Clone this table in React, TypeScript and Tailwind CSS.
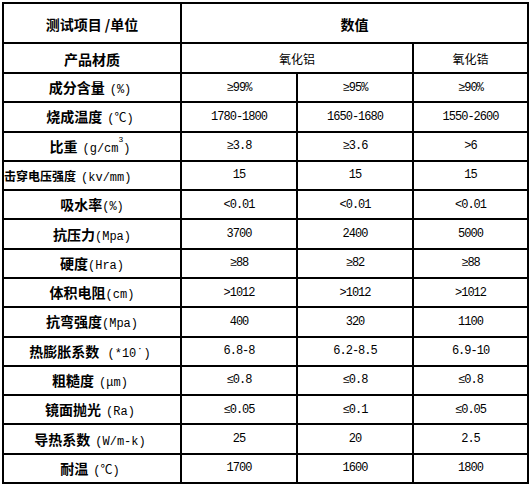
import type { ReactNode } from 'react';

type Row = {
  label: ReactNode;
  values: [string, string, string];
  left?: boolean;
};

const mono = "font-['Liberation_Mono','Noto_Sans_CJK_SC',monospace]";
const cjk = "font-['Noto_Sans_CJK_SC',sans-serif]";

// keep slashes in their own span
const split = (s: string) =>
  s.split('/').map((p, i) => (
    <span key={i}>
      {i > 0 && <span>/</span>}
      {p}
    </span>
  ));

// unit in wide brackets
const F = ({ u, sup }: { u: string; sup?: string }) => (
  <span className={`inline-flex whitespace-pre font-normal text-[12px] pl-[5px] pr-[4px] ${mono}`}>
    <span>(</span>
    {split(u)}
    {sup && <sup className="text-[8px] top-[-3px]">{sup}</sup>}
    <span>)</span>
  </span>
);

// unit in half-width brackets
const H = ({ u }: { u: string }) => (
  <span className={`inline-block whitespace-pre font-normal text-[12px] ${mono}`}>({u})</span>
);

const rows: Row[] = [
  { label: <>成分含量<F u="%" /></>, values: ['≥99%', '≥95%', '≥90%'] },
  { label: <>烧成温度<F u="℃" /></>, values: ['1780-1800', '1650-1680', '1550-2600'] },
  { label: <>比重<F u="g/cm" sup="3" /></>, values: ['≥3.8', '≥3.6', '>6'] },
  {
    label: <span className="text-[12px]">击穿电压强度<F u="kv/mm" /></span>,
    values: ['15', '15', '15'],
    left: true,
  },
  { label: <>吸水率<H u="%" /></>, values: ['<0.01', '<0.01', '<0.01'] },
  { label: <>抗压力<H u="Mpa" /></>, values: ['3700', '2400', '5000'] },
  { label: <>硬度<H u="Hra" /></>, values: ['≥88', '≥82', '≥88'] },
  { label: <>体积电阻<H u="cm" /></>, values: ['>1012', '>1012', '>1012'] },
  { label: <>抗弯强度<H u="Mpa" /></>, values: ['400', '320', '1100'] },
  { label: <>热膨胀系数 <F u="*10˙" /></>, values: ['6.8-8', '6.2-8.5', '6.9-10'] },
  { label: <>粗糙度<F u="μm" /></>, values: ['≤0.8', '≤0.8', '≤0.8'] },
  { label: <>镜面抛光<F u="Ra" /></>, values: ['≤0.05', '≤0.1', '≤0.05'] },
  { label: <>导热系数<F u="W/m-k" /></>, values: ['25', '20', '2.5'] },
  { label: <>耐温<F u="℃" /></>, values: ['1700', '1600', '1800'] },
];

function App() {
  return (
    <div className="min-h-screen bg-white text-black pt-[2px] pl-[2px]">
      <div
        className={`grid grid-cols-[176px_114px_114px_113px] grid-rows-[38px_28px_repeat(14,minmax(0,1fr))] gap-[2px] p-[2px] bg-black w-[527px] h-[482px] ${cjk}`}
      >
        {/* header */}
        <div className="bg-white flex items-center justify-center font-bold text-[14px] pt-[3px]">
          测试项目 /单位
        </div>
        <div className="col-span-3 bg-white flex items-center justify-center font-bold text-[14px] pt-[3px]">
          数值
        </div>

        <div className="bg-white flex items-center justify-center font-bold text-[14px] pt-[2px]">
          产品材质
        </div>
        <div className="col-span-2 bg-white flex items-center justify-center text-[12px] pt-[2px]">
          氧化铝
        </div>
        <div className="bg-white flex items-center justify-center text-[12px] pt-[2px]">
          氧化锆
        </div>

        {rows.map((r, i) => (
          <div key={i} className="contents">
            <div
              className={`bg-white flex items-center whitespace-nowrap pt-[1px] ${
                r.left ? 'justify-start' : 'justify-center'
              }`}
            >
              <span className="font-bold text-[14px] leading-none">{r.label}</span>
            </div>
            {r.values.map((v, j) => (
              <div
                key={j}
                className={`bg-white flex items-center justify-center text-[12px] tracking-[-1px] ${mono}`}
              >
                {v}
              </div>
            ))}
          </div>
        ))}
      </div>
    </div>
  );
}

export default App;
